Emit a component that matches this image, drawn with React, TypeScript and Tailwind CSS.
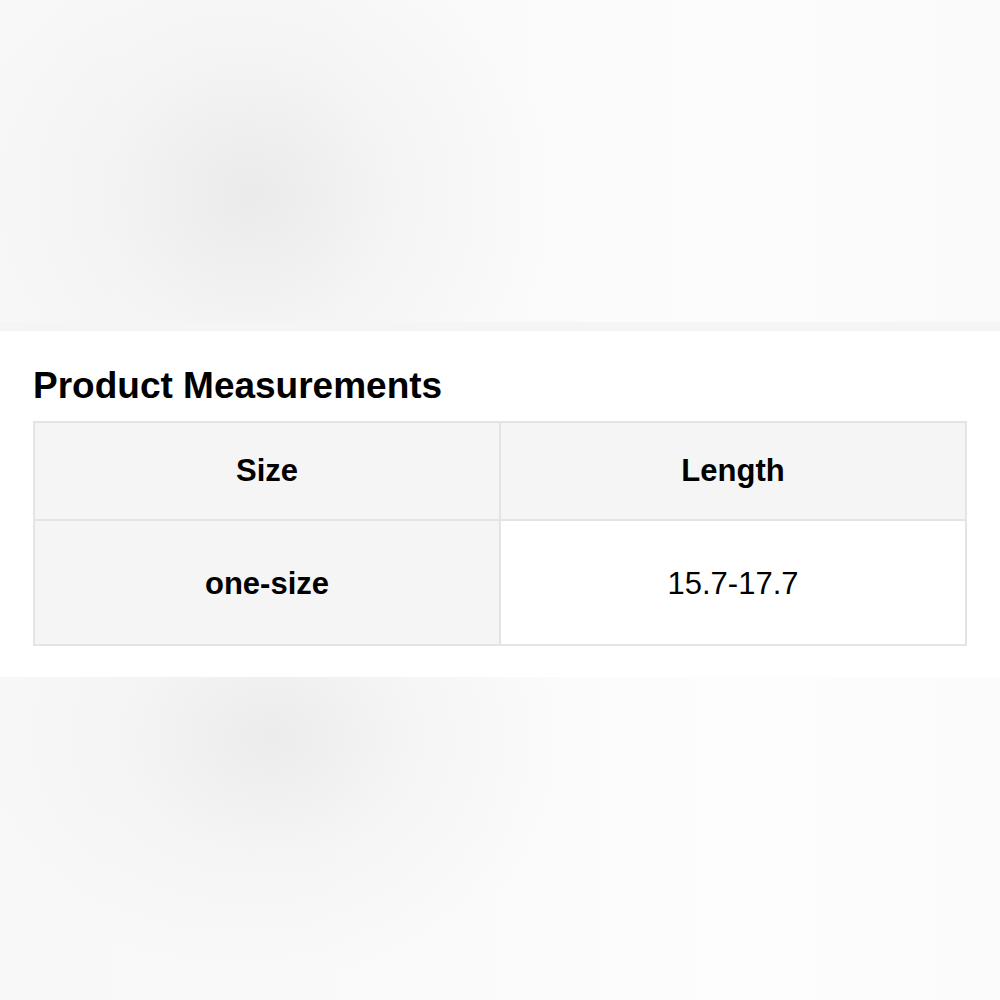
const rows = [{ size: 'one-size', length: '15.7-17.7' }];

export default function App() {
  return (
    <div className="flex h-[1000px] w-[1000px] flex-col bg-white font-['Liberation_Sans',Arial,sans-serif] text-black">
      <div className="h-[322px] bg-[radial-gradient(ellipse_300px_280px_at_250px_195px,rgba(225,225,225,0.6)_0%,rgba(235,235,235,0.35)_50%,rgba(250,250,250,0)_100%),linear-gradient(90deg,#f8f8f8_0%,#fafafa_45%,#fcfcfc_75%,#fafafa_100%)] bg-no-repeat" />
      <div className="h-[9px] bg-[#f5f5f5]" />

      <section className="px-[33px] pb-[31px] pt-[36px]">
        <h2 className="text-[37px] font-bold leading-[37px]">Product Measurements</h2>
        <table className="mt-[17px] w-full table-fixed border-collapse border-2 border-[#e4e4e4]">
          <thead>
            <tr className="bg-[#f5f5f5]">
              <th className="h-[98px] border-2 border-[#e4e4e4] text-[31px] font-bold">Size</th>
              <th className="h-[98px] border-2 border-[#e4e4e4] text-[31px] font-bold">Length</th>
            </tr>
          </thead>
          <tbody>
            {rows.map((r) => (
              <tr key={r.size}>
                <td className="h-[125px] border-2 border-[#e4e4e4] bg-[#f5f5f5] pt-[4px] text-center text-[31px] font-bold">
                  {r.size}
                </td>
                <td className="h-[125px] border-2 border-[#e4e4e4] bg-white pt-[4px] text-center text-[31px]">
                  {r.length}
                </td>
              </tr>
            ))}
          </tbody>
        </table>
      </section>

      <div className="flex-1 bg-[radial-gradient(ellipse_300px_240px_at_270px_60px,rgba(225,225,225,0.55)_0%,rgba(235,235,235,0.3)_50%,rgba(250,250,250,0)_100%),linear-gradient(90deg,#f8f8f8_0%,#fafafa_45%,#fdfdfd_75%,#fbfbfb_100%)] bg-no-repeat" />
    </div>
  );
}
